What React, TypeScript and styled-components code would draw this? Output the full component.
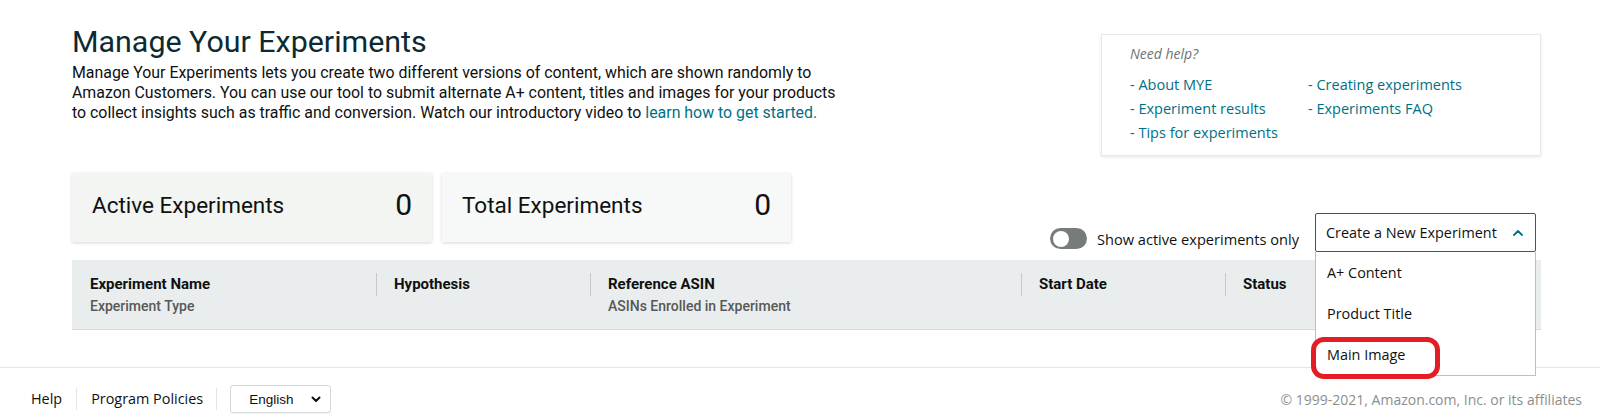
import React from "react";
import styled, { createGlobalStyle } from "styled-components";

const GlobalStyle = createGlobalStyle`
  html, body { margin: 0; padding: 0; background: #ffffff; }
  body { font-family: Roboto, "Liberation Sans", Arial, sans-serif; color: #0f1111; }
  * { box-sizing: border-box; }
`;

const Page = styled.div`
  width: 1600px;
  height: 420px;
  overflow: hidden;
  display: flex;
  flex-direction: column;
`;

const Main = styled.main`
  padding: 0 59px 0 72px;
`;

const TopRow = styled.div`
  display: flex;
  justify-content: space-between;
  align-items: flex-start;
`;

const Intro = styled.section`
  padding-top: 25px;
  width: 760px;
`;

const Title = styled.h1`
  margin: 0;
  font-family: Roboto, "Liberation Sans", sans-serif;
  font-weight: 400;
  font-size: 30.4px;
  line-height: 34px;
  color: #0b2a31;
`;

const Description = styled.p`
  margin: 4px 0 0;
  font-size: 15.9px;
  line-height: 20px;
  color: #0f1111;
  white-space: nowrap;
`;

const Link = styled.a`
  color: #007185;
  text-decoration: none;
`;

const HelpBox = styled.aside`
  margin-top: 34px;
  width: 440px;
  height: 122px;
  background: #fff;
  border: 1px solid #e7e9e9;
  box-shadow: 0 1px 3px rgba(0, 0, 0, 0.1);
  padding: 9px 28px;
  font-family: "Open Sans", sans-serif;
  font-size: 14.5px;
`;

const HelpTitle = styled.div`
  font-style: italic;
  color: #6f7373;
  font-size: 14px;
  line-height: 20px;
  margin-bottom: 9px;
`;

const HelpGrid = styled.ul`
  list-style: none;
  margin: 0;
  padding: 0;
  display: grid;
  grid-template-columns: 178px 1fr;
  grid-auto-rows: 24px;
  line-height: 24px;
`;

const StatsRow = styled.div`
  display: flex;
  justify-content: space-between;
  align-items: flex-end;
  margin-top: 17px;
  margin-bottom: 8px;
`;

const Cards = styled.div`
  display: flex;
  gap: 10px;
  margin-bottom: 10px;
`;

const Card = styled.div<{ $tint: string; $w: number }>`
  width: ${(p) => p.$w}px;
  height: 69px;
  background: ${(p) => p.$tint};
  box-shadow: 0 1px 3px rgba(0, 0, 0, 0.16);
  display: flex;
  align-items: center;
  justify-content: space-between;
  padding: 0 20px 6px 20px;
`;

const CardLabel = styled.span`
  font-size: 22.5px;
  color: #0f1111;
`;

const CardValue = styled.span`
  font-size: 30px;
  color: #0f1111;
`;

const Controls = styled.div`
  display: flex;
  align-items: center;
  gap: 16px;
  margin-right: 5px;
  font-family: "Open Sans", sans-serif;
`;

const ToggleWrap = styled.label`
  display: flex;
  align-items: center;
  gap: 10px;
  font-size: 14.6px;
  color: #0f1111;
  margin-top: 12px;
`;

const Track = styled.span`
  width: 37px;
  height: 21px;
  border-radius: 11px;
  background: #767c7c;
  display: flex;
  align-items: center;
  padding: 0 3px;
`;

const Knob = styled.span`
  width: 16px;
  height: 16px;
  border-radius: 50%;
  background: #fff;
`;

const DropdownWrap = styled.div`
  position: relative;
  width: 221px;
`;

const DropButton = styled.button`
  width: 221px;
  height: 39px;
  border: 1px solid #007185;
  border-radius: 2px;
  background: #fff;
  display: flex;
  align-items: center;
  justify-content: space-between;
  padding: 0 10px 0 10px;
  font-family: "Open Sans", sans-serif;
  font-size: 14.4px;
  color: #0f1111;
`;

const Menu = styled.ul`
  position: absolute;
  top: 39px;
  left: 0;
  width: 221px;
  margin: 0;
  padding: 0;
  list-style: none;
  background: #fff;
  border: 1px solid #bbbfbf;
  border-top: none;
  z-index: 5;
  font-family: "Open Sans", sans-serif;
  font-size: 14.4px;
`;

const MenuItem = styled.li`
  position: relative;
  height: 41px;
  line-height: 41px;
  padding-left: 11px;
  color: #0f1111;
`;

const Highlight = styled.span`
  position: absolute;
  left: -5px;
  top: 3px;
  width: 129px;
  height: 42px;
  border: 5px solid #e41c24;
  border-radius: 13px;
`;

const TableHead = styled.div`
  display: grid;
  grid-template-columns: 304px 214px 431px 204px 1fr;
  background: #eaeded;
  border-bottom: 1px solid #d5d9d9;
  padding: 13px 0 13px;
`;

const HeadCell = styled.div``;

const HeadTitle = styled.div<{ $first?: boolean }>`
  font-weight: 700;
  font-size: 15px;
  line-height: 23px;
  padding-left: 17px;
  border-left: 1px solid ${(p) => (p.$first ? "transparent" : "#c4c8c8")};
  color: #0f1111;
`;

const HeadSub = styled.div`
  font-weight: 500;
  font-size: 14px;
  line-height: 20px;
  padding-left: 18px;
  color: #565959;
`;

const Footer = styled.footer`
  margin-top: 37px;
  border-top: 1px solid #e3e6e6;
  display: flex;
  justify-content: space-between;
  align-items: center;
  padding: 17px 18px 0 31px;
  font-family: "Open Sans", sans-serif;
  font-size: 14px;
`;

const FooterLinks = styled.div`
  display: flex;
  align-items: center;
`;

const FooterLink = styled.span<{ $sep?: boolean; $gap: number }>`
  color: #0f1111;
  font-size: 14.4px;
  padding-right: ${(p) => p.$gap}px;
  margin-right: ${(p) => p.$gap}px;
  border-right: 1px solid ${(p) => (p.$sep ? "#e3e6e6" : "transparent")};
  line-height: 22px;
`;

const LangSelect = styled.div`
  width: 101px;
  height: 28px;
  border: 1px solid #d5d9d9;
  border-radius: 3px;
  display: flex;
  align-items: center;
  justify-content: space-between;
  padding: 0 8px 0 18px;
  font-family: "Liberation Sans", Arial, sans-serif;
  font-size: 13.5px;
  color: #0f1111;
  box-shadow: 0 1px 1px rgba(0, 0, 0, 0.05);
`;

const Copyright = styled.span`
  color: #8a8f8f;
  font-size: 14px;
`;

const ChevronUp = () => (
  <svg width="14" height="14" viewBox="0 0 14 14" fill="none">
    <path d="M3 9l4-4 4 4" stroke="#007185" strokeWidth="1.8" strokeLinecap="round" strokeLinejoin="round" />
  </svg>
);

const ChevronDown = () => (
  <svg width="12" height="12" viewBox="0 0 12 12" fill="none">
    <path d="M2.5 4.5L6 8l3.5-3.5" stroke="#0f1111" strokeWidth="2" strokeLinecap="round" strokeLinejoin="round" />
  </svg>
);

export default function App() {
  const columns = [
    { title: "Experiment Name", sub: "Experiment Type" },
    { title: "Hypothesis", sub: "" },
    { title: "Reference ASIN", sub: "ASINs Enrolled in Experiment" },
    { title: "Start Date", sub: "" },
    { title: "Status", sub: "" },
  ];
  return (
    <Page>
      <GlobalStyle />
      <Main>
        <TopRow>
          <Intro>
            <Title>Manage Your Experiments</Title>
            <Description>
              Manage Your Experiments lets you create two different versions of content, which are shown randomly to
              <br />
              Amazon Customers. You can use our tool to submit alternate A+ content, titles and images for your products
              <br />
              to collect insights such as traffic and conversion. Watch our introductory video to{" "}
              <Link>learn how to get started.</Link>
            </Description>
          </Intro>
          <HelpBox>
            <HelpTitle>Need help?</HelpTitle>
            <HelpGrid>
              <li><Link>- About MYE</Link></li>
              <li><Link>- Creating experiments</Link></li>
              <li><Link>- Experiment results</Link></li>
              <li><Link>- Experiments FAQ</Link></li>
              <li><Link>- Tips for experiments</Link></li>
            </HelpGrid>
          </HelpBox>
        </TopRow>
        <StatsRow>
          <Cards>
            <Card $tint="#f2f5f2" $w={360}>
              <CardLabel>Active Experiments</CardLabel>
              <CardValue>0</CardValue>
            </Card>
            <Card $tint="#f7f8f8" $w={349}>
              <CardLabel>Total Experiments</CardLabel>
              <CardValue>0</CardValue>
            </Card>
          </Cards>
          <Controls>
            <ToggleWrap>
              <Track><Knob /></Track>
              Show active experiments only
            </ToggleWrap>
            <DropdownWrap>
              <DropButton>
                Create a New Experiment
                <ChevronUp />
              </DropButton>
              <Menu>
                <MenuItem>A+ Content</MenuItem>
                <MenuItem>Product Title</MenuItem>
                <MenuItem>
                  Main Image
                  <Highlight />
                </MenuItem>
              </Menu>
            </DropdownWrap>
          </Controls>
        </StatsRow>
        <TableHead>
          {columns.map((c, i) => (
            <HeadCell key={c.title}>
              <HeadTitle $first={i === 0}>{c.title}</HeadTitle>
              <HeadSub>{c.sub || "\u00a0"}</HeadSub>
            </HeadCell>
          ))}
        </TableHead>
      </Main>
      <Footer>
        <FooterLinks>
          <FooterLink $sep $gap={14}>Help</FooterLink>
          <FooterLink $sep $gap={13}>Program Policies</FooterLink>
          <LangSelect>
            English
            <ChevronDown />
          </LangSelect>
        </FooterLinks>
        <Copyright>© 1999-2021, Amazon.com, Inc. or its affiliates</Copyright>
      </Footer>
    </Page>
  );
}
